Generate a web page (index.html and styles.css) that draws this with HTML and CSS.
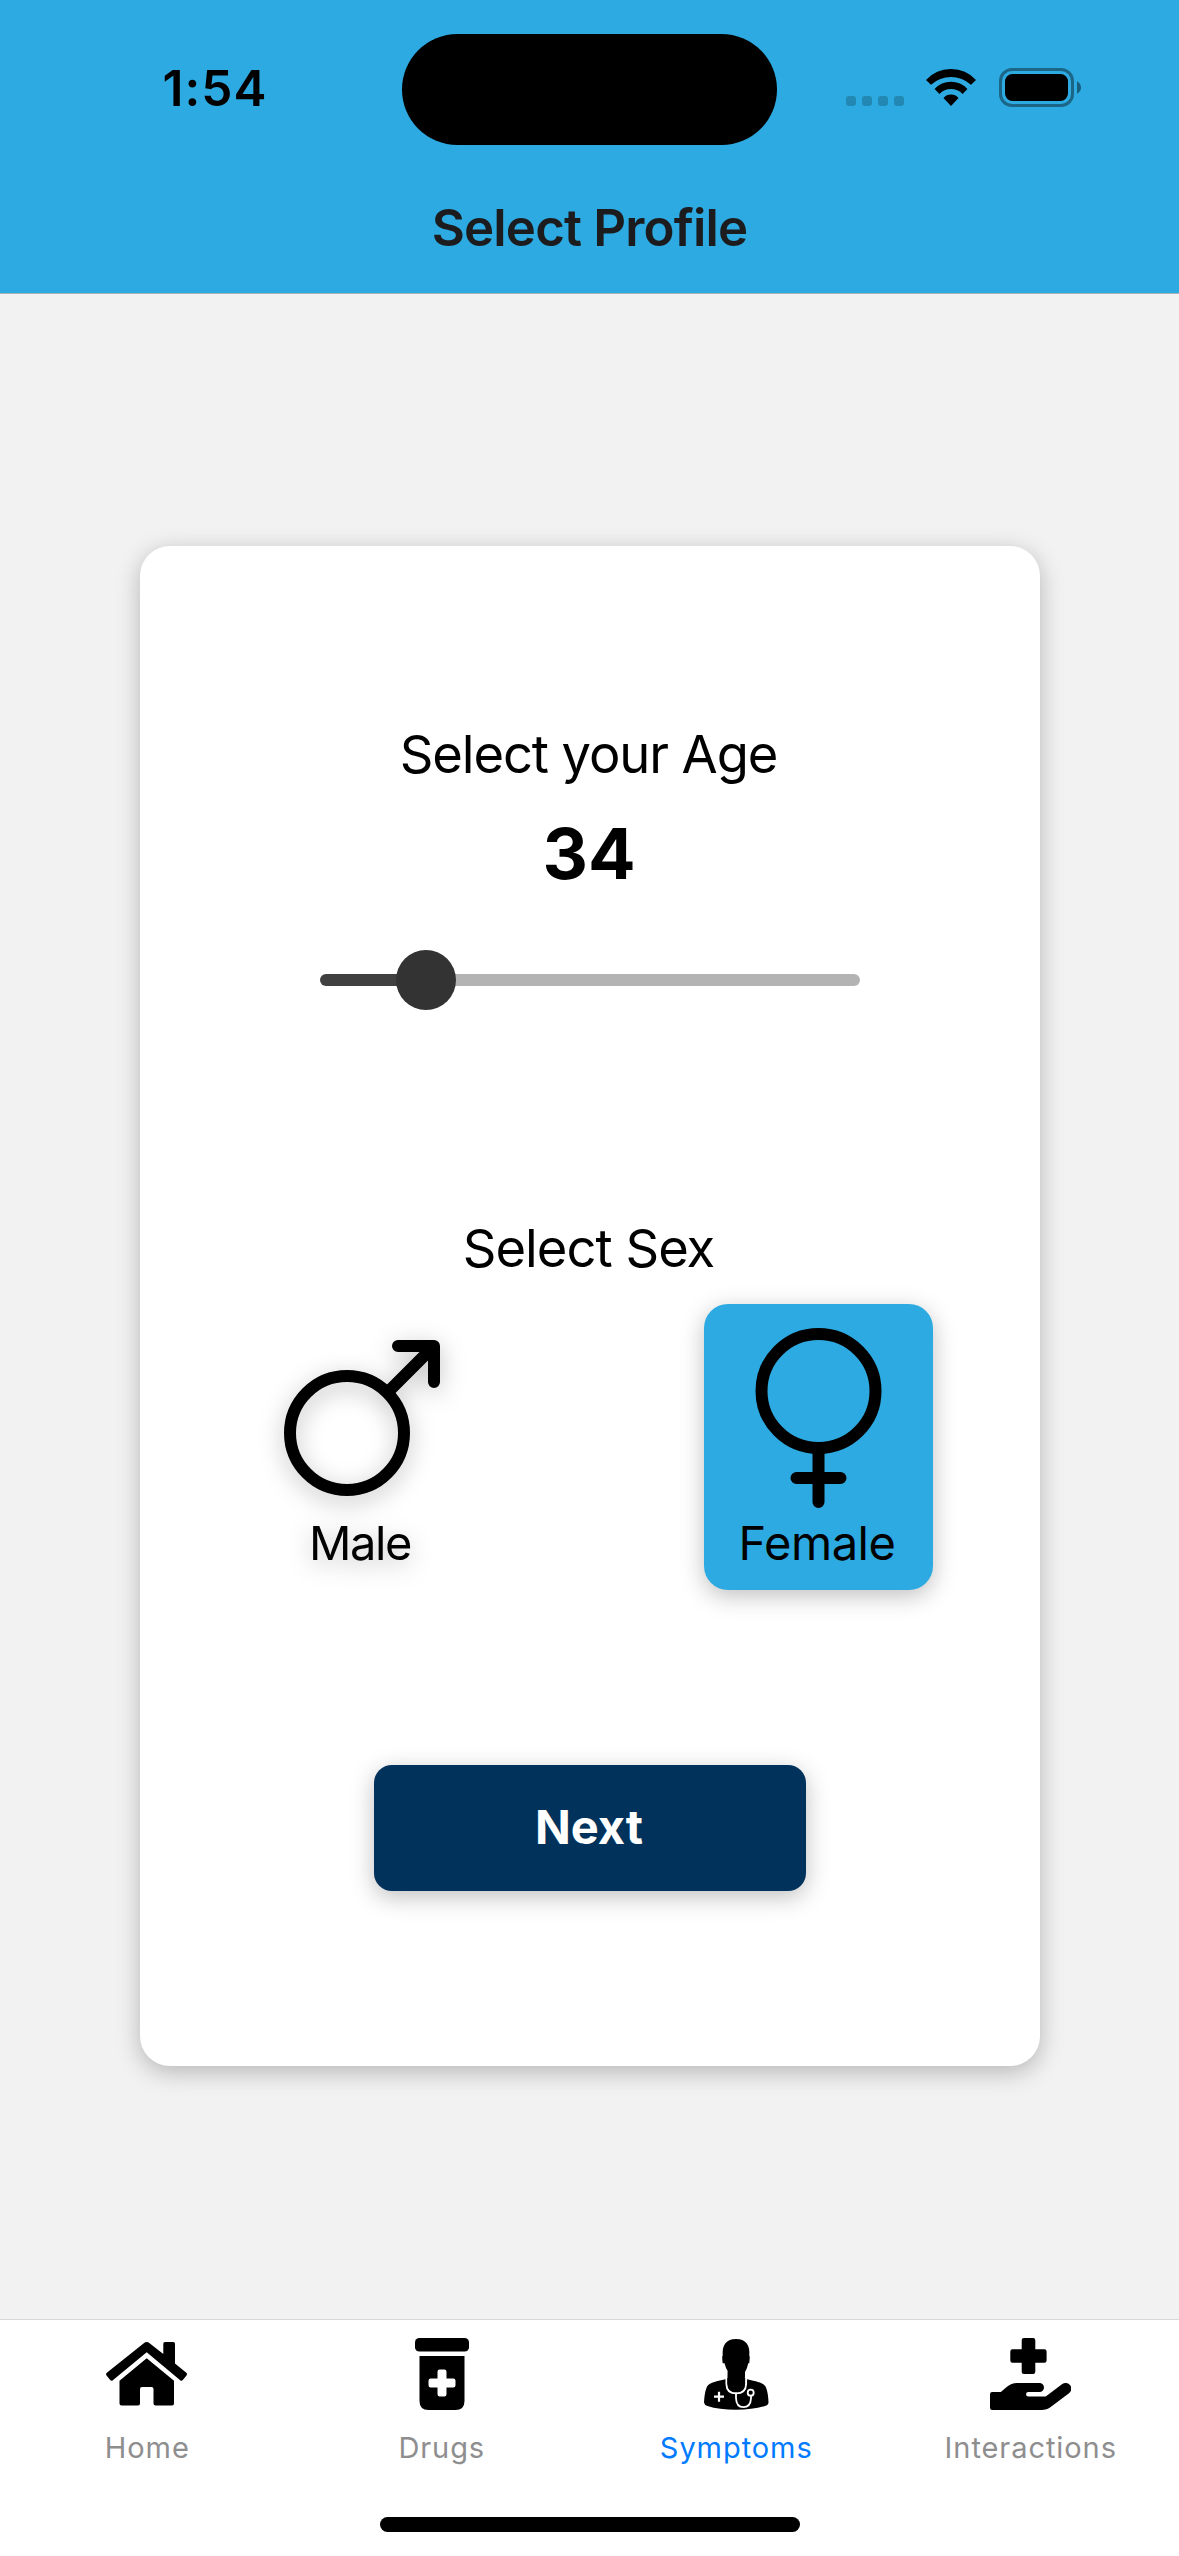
FILE: index.html
```html
<!DOCTYPE html>
<html lang="en">
<head>
<meta charset="utf-8">
<title>Select Profile</title>
<link rel="stylesheet" href="styles.css">
</head>
<body>
<div class="screen">
  <header class="header">
    <div class="status">
      <div class="status-left"><span class="clock">1:54</span></div>
      <div class="island"></div>
      <div class="status-right">
        <div class="signal"><i></i><i></i><i></i><i></i></div>
        <svg class="wifi" viewBox="0 0 50 37"><path d="M0 11A33.9 33.9 0 0 1 50 11L45 15.7A29.8 29.8 0 0 0 5 15.7ZM8.6 20A22 22 0 0 1 41.4 20L36.6 25A16 16 0 0 0 13.4 25ZM17.5 29A9.8 9.8 0 0 1 32.5 29L25 37Z"/></svg>
        <svg class="battery" viewBox="0 0 83 39"><rect x="1.5" y="1.5" width="72" height="36" rx="11.5" fill="none" stroke="#000" stroke-opacity=".4" stroke-width="3"/><rect x="6" y="6" width="63" height="27" rx="7.5"/><path d="M78 13.2Q82 15.5 82 19.5T78 25.8Z" fill-opacity=".45"/></svg>
      </div>
    </div>
    <h1 class="title">Select Profile</h1>
  </header>

  <main class="content">
    <section class="card">
      <h2 class="label label-age">Select your Age</h2>
      <div class="age">34</div>
      <div class="slider"><div class="fill"></div><div class="thumb"></div><div class="rest"></div></div>
      <h2 class="label label-sex">Select Sex</h2>
      <div class="options">
        <div class="option option-male">
          <svg viewBox="0 0 180 180"><g fill="none" stroke="#000" stroke-width="12" stroke-linecap="round" stroke-linejoin="round"><circle cx="75" cy="105" r="57"/><path d="M126 18H162V54M115.5 64.5L162 18"/></g></svg>
          <span class="male">Male</span>
        </div>
        <div class="option option-female">
          <svg viewBox="0 0 180 180"><g fill="none" stroke="#000" stroke-width="12" stroke-linecap="round"><circle cx="89.5" cy="63" r="57"/><path d="M89.5 120V174M67.5 150H111.5"/></g></svg>
          <span class="female">Female</span>
        </div>
      </div>
      <button class="next">Next</button>
    </section>
  </main>

  <nav class="tabs">
    <div class="tab-row">
      <a class="tab">
        <svg class="icon-home" viewBox="0 0 81 64"><path d="M37.8 1.2Q40.7-1 43.6 1.2L57.3 12V1.8Q57.3 0 59 0H67.3Q69 0 69 1.8V21.5L80.3 30.8Q81.6 32 80.5 33.4L76.8 38Q75.5 39.3 74.2 38.2L40.7 10.3L6.8 38.2Q5.5 39.3 4.2 38L.5 33.4Q-.5 32 .8 30.8Z"/><path d="M40.7 16.3L68 38.7V61.5Q68 63.5 66 63.5H49.7Q47.5 63.5 47.5 61.5V47Q47.5 45 45.5 45H36Q34 45 34 47V61.5Q34 63.5 32 63.5H15.5Q13.5 63.5 13.5 61.5V38.7Z"/></svg>
        <span>Home</span>
      </a>
      <a class="tab">
        <svg class="icon-drugs" viewBox="0 0 54 72"><rect width="54" height="13.6" rx="4.3"/><path d="M4.5 18H49.5V63Q49.5 72 40.5 72H13.5Q4.5 72 4.5 63ZM24.7 31.5Q22.5 31.5 22.5 33.7V40.5H15.7Q13.5 40.5 13.5 42.7V47.3Q13.5 49.5 15.7 49.5H22.5V56.3Q22.5 58.5 24.7 58.5H29.3Q31.5 58.5 31.5 56.3V49.5H38.3Q40.5 49.5 40.5 47.3V42.7Q40.5 40.5 38.3 40.5H31.5V33.7Q31.5 31.5 29.3 31.5Z" fill-rule="evenodd"/></svg>
        <span>Drugs</span>
      </a>
      <a class="tab active">
        <svg class="icon-doctor" viewBox="0 0 65 71"><path d="M21.3 40.2C9 43 4.5 44 2.6 48.5C.8 53 .2 59 0 63.5Q.3 66 3.5 67Q15 70.8 32 70.8T61 67Q64.3 66 64.5 63.5C64.4 59 63.8 53 62 48.5C60 44 55.5 43 43 40.2Z"/><path d="M22.4 39V45Q22.6 54.4 32.2 54.4T42.1 45V39" fill="#000" stroke="#fff" stroke-width="1.9"/><path d="M23.6 32H40.7L41 44Q40.6 53 32.2 53T23.4 44Z"/><path d="M18.7 17Q17.5 0 32 0T45.3 17Q46 17 45.7 19L45.3 24.3H44.2Q43.5 29 41 33V38H24.3V33Q21.5 29 20.5 24.3H18.7Q18 20 18.3 17Z"/><g fill="none" stroke="#fff" stroke-width="1.8"><path d="M32 53.5V59Q32.3 68.2 39.4 68.2T47 59.5V57"/><circle cx="46.7" cy="53.7" r="3"/><path d="M10 57.7H20M15 52.7V62.7" stroke-width="2.2"/></g></svg>
        <span>Symptoms</span>
      </a>
      <a class="tab">
        <svg class="icon-hand" viewBox="0 0 81 72"><path d="M33.9 0H43.1Q45.3 0 45.3 2.2V11.2H54.4Q56.6 11.2 56.6 13.4V22.5Q56.6 24.7 54.4 24.7H45.3V33.8Q45.3 36 43.1 36H33.9Q31.7 36 31.7 33.8V24.7H22.5Q20.3 24.7 20.3 22.5V13.4Q20.3 11.2 22.5 11.2H31.7V2.2Q31.7 0 33.9 0Z"/><path d="M2.2 54H10.8L17 48.8Q21.2 45 27 45H49.5A4.5 4.5 0 0 1 49.5 54H38.3A2.25 2.25 0 0 0 38.3 58.5H55.7L72.3 46.1A5.4 5.4 0 0 1 79 55.2L61 68.7Q56.8 72 51.5 72H2.2Q0 72 0 69.8V56.2Q0 54 2.2 54Z"/></svg>
        <span>Interactions</span>
      </a>
    </div>
    <div class="home-bar"></div>
  </nav>
</div>
</body>
</html>
```
FILE: styles.css
```css
* { box-sizing: border-box; margin: 0; padding: 0; }
body { width: 1179px; font-family: Inter, "Liberation Sans", sans-serif; color: #000; }
svg { display: block; flex: none; }
.screen { display: flex; flex-direction: column; width: 1179px; height: 2556px; background: #f2f2f2; }

.header { height: 294px; background: #2daae1; border-bottom: 1px solid #a7b3b9; }
.status { display: grid; grid-template-columns: 402px 375px 402px; height: 178px; padding-top: 33.5px; }
.status-left { display: flex; justify-content: center; align-items: center; height: 109px; padding-left: 28px; }
.clock { font-size: 49.5px; font-weight: 600; line-height: 60px; letter-spacing: 1px; }
.island { height: 111px; border-radius: 56px; background: #000; }
.status-right { display: flex; padding: 34.5px 0 0 69px; }
.signal { display: flex; gap: 6px; padding-top: 28px; }
.signal i { width: 10px; height: 10px; border-radius: 3px; background: rgba(0, 0, 0, .2); }
.wifi { width: 50px; height: 37px; margin: 1px 23px 0 22px; }
.battery { width: 83px; height: 39px; }
.title { height: 100px; font-size: 51px; font-weight: 600; line-height: 99px; letter-spacing: -.85px; color: #1c1c1e; text-align: center; }

.content { flex: 1; padding: 252px 139px 0 140px; }
.card { display: flex; flex-direction: column; align-items: center; height: 1520px; padding-top: 176px; border-radius: 30px; background: #fff; box-shadow: 0 6px 23px rgba(0, 0, 0, .25); }
.label { padding-right: 3px; font-size: 52.5px; font-weight: 400; line-height: 64px; letter-spacing: -1.1px; }
.age { margin-top: 25px; padding-right: 2px; font-size: 70.5px; font-weight: 700; line-height: 86px; }
.slider { display: flex; align-items: center; width: 540px; height: 60px; margin-top: 53px; }
.fill { width: 77px; height: 12px; margin-right: -1px; border-radius: 6px 0 0 6px; background: #404040; }
.thumb { z-index: 1; width: 60px; height: 60px; border-radius: 50%; background: #333; }
.rest { flex: 1; height: 12px; margin-left: -1px; border-radius: 0 6px 6px 0; background: #b3b3b3; }
.label-sex { margin-top: 206px; letter-spacing: -.97px; }
.options { display: flex; justify-content: space-between; width: 100%; margin-top: 24px; padding: 0 107px 0 130px; }
.option { display: flex; flex-direction: column; align-items: center; height: 286px; padding-top: 24px; border-radius: 24px; font-size: 47px; line-height: 58px; }
.option svg { width: 180px; height: 180px; margin-bottom: 6px; }
.option-male { width: 184px; filter: drop-shadow(0 6px 11.5px rgba(0, 0, 0, .25)); }
.option-female { width: 229px; background: #2daae1; box-shadow: 0 6px 23px rgba(0, 0, 0, .25); }
.male { padding-right: 4px; letter-spacing: -1.4px; }
.female { padding-right: 3px; letter-spacing: -.48px; }
.next { width: 432px; height: 126px; margin-top: 175px; padding: 0 2px 3px 0; border: 0; border-radius: 18px; background: #00325c; color: #fff; font-family: inherit; font-size: 47px; font-weight: 700; box-shadow: 0 6px 23px rgba(0, 0, 0, .25); }

.tabs { height: 237px; border-top: 1px solid #d8d8d8; background: #fff; }
.tab-row { display: grid; grid-template-columns: repeat(4, 1fr); padding: 18px 1px 0 0; }
.tab { display: grid; grid-template-rows: 72px 36px; row-gap: 20px; justify-items: center; align-items: center; color: #8e8e8f; font-size: 29px; line-height: 36px; letter-spacing: .93px; }
.active { color: #007aff; }
.icon-home { width: 81px; height: 64px; margin-right: 1.5px; }
.icon-drugs { width: 54px; height: 72px; }
.icon-doctor { width: 65px; height: 71px; }
.icon-hand { width: 81px; height: 72px; }
.home-bar { width: 420px; height: 15px; margin: 51px auto 0; border-radius: 8px; background: #000; }
```
